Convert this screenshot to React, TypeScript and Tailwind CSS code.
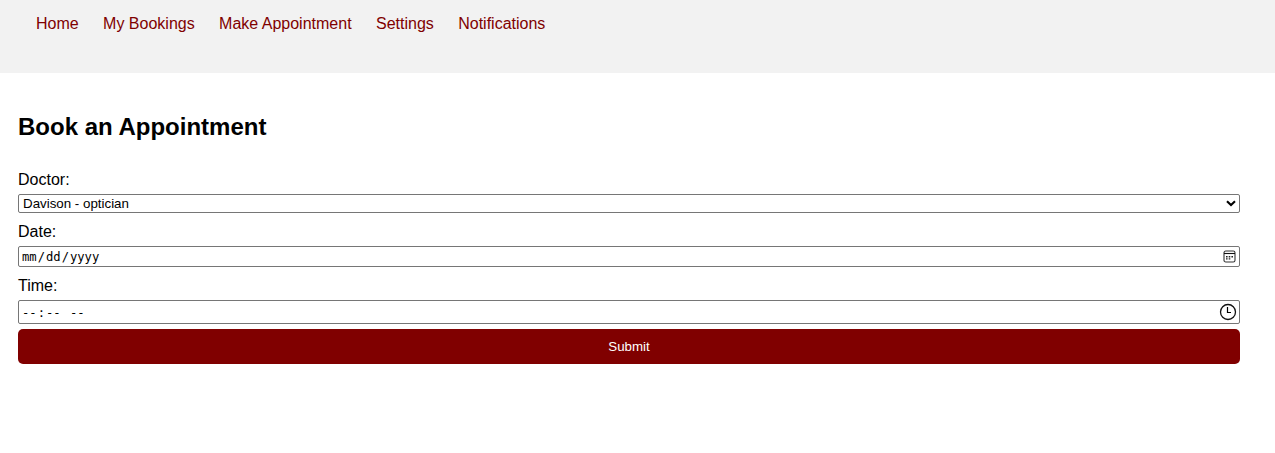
import React from "react";

const links = ["Home", "My Bookings", "Make Appointment", "Settings", "Notifications"];

function ChevronIcon() {
  return (
    <svg width="10" height="8" viewBox="0 0 10 8" className="pointer-events-none absolute right-1 top-[5px]" fill="none">
      <path d="M1 2.2 L5 6 L9 2.2" stroke="#000" strokeWidth="2.1" />
    </svg>
  );
}

function CalendarIcon() {
  return (
    <svg width="13" height="13" viewBox="0 0 13 13" fill="none">
      <rect x="1" y="1" width="11" height="11" rx="1.8" stroke="#333" strokeWidth="1.1" />
      <path d="M1 3.5H12" stroke="#111" strokeWidth="1.1" />
      <path d="M3 6h1.6v1.4H3zM5.7 6h1.6v1.4H5.7zM8.4 6h1.6v1.4H8.4zM3 8.2h1.6v1.4H3zM5.7 8.2h1.6v1.4H5.7z" fill="#222" />
    </svg>
  );
}

function ClockIcon() {
  return (
    <svg width="18" height="18" viewBox="0 0 18 18" fill="none">
      <circle cx="9" cy="9" r="7.5" stroke="#111" strokeWidth="1.3" />
      <path d="M8.5 4V9.5H12" stroke="#000" strokeWidth="1.2" />
    </svg>
  );
}

function Segments({ parts }: { parts: string[] }) {
  return (
    <span className="mt-[2px] flex whitespace-pre font-['DejaVu_Sans_Mono',monospace] text-[12.18px] leading-[15px]">
      {parts.map((part, i) => (
        <span key={i} className={i % 2 === 0 ? "px-px" : ""}>{part}</span>
      ))}
    </span>
  );
}

export default function App() {
  return (
    <div className="min-h-[453px] bg-white font-['Liberation_Sans',Arial,sans-serif] text-base text-black">
      <nav className="h-[73px] bg-[#f2f2f2] pl-9 pt-[15px]">
        <ul className="flex gap-[24.4px] leading-[18px] text-[#800000]">
          {links.map((link) => (
            <li key={link}><a href="#">{link}</a></li>
          ))}
        </ul>
      </nav>
      <main className="pl-[18px] pr-[35px] pt-10">
        <h2 className="text-2xl font-bold leading-[28px]">Book an Appointment</h2>
        <form className="flex flex-col pt-[30px]">
          <label htmlFor="doctor" className="leading-[18px]">Doctor:</label>
          <div className="relative mt-[5px] h-[19px]">
            <select id="doctor" className="block h-full w-full appearance-none rounded-[2px] border border-[#767676] bg-white px-1 text-[13.333px] leading-[17px]">
              <option>Davison - optician</option>
            </select>
            <ChevronIcon />
          </div>
          <label className="mt-[10px] leading-[18px]">Date:</label>
          <div className="mt-[5px] flex h-[21px] items-center justify-between rounded-[2px] border border-[#767676] pl-[2px] pr-[3px]">
            <Segments parts={["mm", "/", "dd", "/", "yyyy"]} />
            <CalendarIcon />
          </div>
          <label className="mt-[10px] leading-[18px]">Time:</label>
          <div className="mt-[5px] flex h-6 items-center justify-between rounded-[2px] border border-[#767676] pl-[2px] pr-[2px]">
            <Segments parts={["--", ":", "--", " ", "--"]} />
            <ClockIcon />
          </div>
          <button type="button" className="mt-[5px] h-[35px] rounded-[5px] bg-[#800000] text-[13.333px] text-white">Submit</button>
        </form>
      </main>
    </div>
  );
}
